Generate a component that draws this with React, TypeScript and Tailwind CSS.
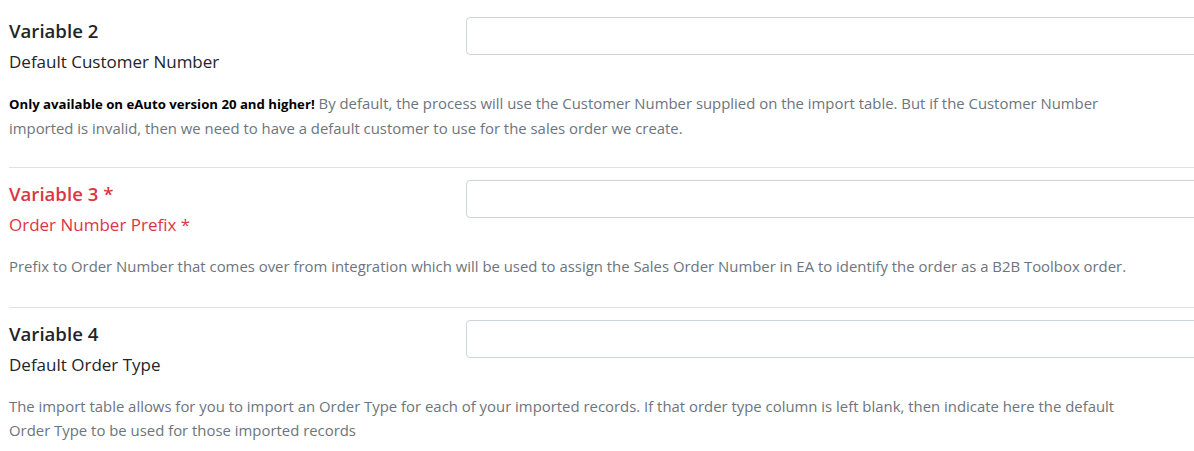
import React from 'react';

interface VariableRowProps {
  title: string;
  label: string;
  required?: boolean;
  first?: boolean;
  children: React.ReactNode;
}

function VariableRow({ title, label, required, first, children }: VariableRowProps) {
  return (
    <div className={first ? 'pt-[17px] pb-[27px]' : 'border-t border-[#dee2e6] pt-[12px] pb-[29px]'}>
      <div className="flex">
        <div className="w-[457px] shrink-0">
          <h5
            className={
              'text-[18.6px] font-semibold leading-[28px] ' + (required ? 'text-[#dc3545]' : 'text-[#212529]')
            }
          >
            {title}
            {required && ' *'}
          </h5>
          <div className={'mt-[5px] text-[17px] leading-[24px] ' + (required ? 'text-[#dc3545]' : 'text-[#212529]')}>
            {label}
            {required && ' *'}
          </div>
        </div>
        <input
          type="text"
          className="h-[38px] w-[760px] shrink-0 rounded-[4px] border border-[#ced4da] bg-white outline-none"
        />
      </div>
      <p className="mt-[17px] w-[1141px] text-[14.9px] leading-[24px] text-[#6c757d]">{children}</p>
    </div>
  );
}

export default function App() {
  return (
    <div
      className="w-[1194px] h-[451px] overflow-hidden bg-white"
      style={{ fontFamily: '"Open Sans", "Noto Sans", Arial, sans-serif' }}
    >
      <div className="pl-[9px]">
        <VariableRow title="Variable 2" label="Default Customer Number" first>
          <b className="text-[13.2px] font-bold text-black">Only available on eAuto version 20 and higher!</b> By
          default, the process will use the Customer Number supplied on the import table. But if the Customer
          Number imported is invalid, then we need to have a default customer to use for the sales order we create.
        </VariableRow>
        <VariableRow title="Variable 3" label="Order Number Prefix" required>
          Prefix to Order Number that comes over from integration which will be used to assign the Sales Order
          Number in EA to identify the order as a B2B Toolbox order.
        </VariableRow>
        <VariableRow title="Variable 4" label="Default Order Type">
          The import table allows for you to import an Order Type for each of your imported records. If that order
          type column is left blank, then indicate here the default Order Type to be used for those imported
          records
        </VariableRow>
      </div>
    </div>
  );
}
